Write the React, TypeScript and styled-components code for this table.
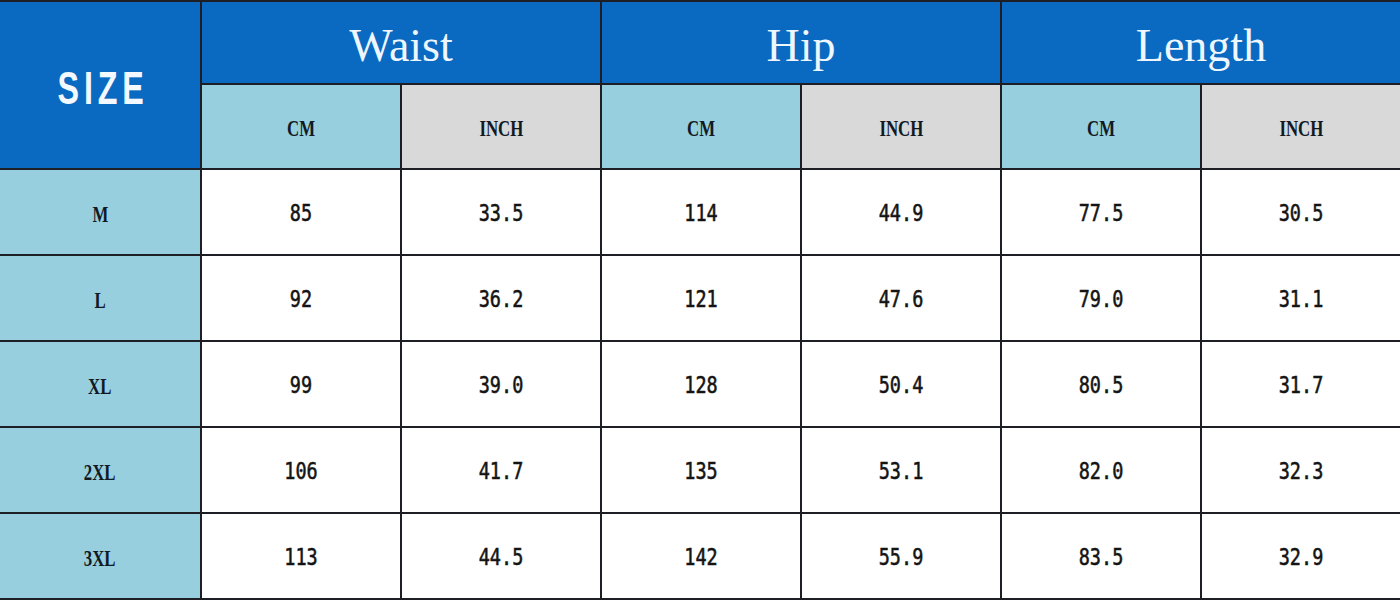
import React from "react";
import styled, { createGlobalStyle } from "styled-components";

const GlobalStyle = createGlobalStyle`
  html, body {
    margin: 0;
    padding: 0;
    background: #ffffff;
  }
`;

const Table = styled.div`
  width: 1400px;
  height: 600px;
  box-sizing: border-box;

  display: grid;
  grid-template-columns: 200px repeat(6, 198px);
  grid-template-rows: 81px 83px repeat(5, 84px);
  column-gap: 2px;
  row-gap: 2px;

  padding: 2px 0 2px 0;
  background-color: #1d1f24;
`;

type Tone = "blue" | "sky" | "grey" | "white";

const tones: Record<Tone, string> = {
  blue: "#0a69c0",
  sky: "#97cfdf",
  grey: "#d9d9d9",
  white: "#ffffff",
};

const Cell = styled.div<{ $tone: Tone; $rowSpan?: number; $colSpan?: number }>`
  background-color: ${(p) => tones[p.$tone]};
  grid-row: span ${(p) => p.$rowSpan || 1};
  grid-column: span ${(p) => p.$colSpan || 1};

  display: flex;
  justify-content: center;
  align-items: center;
  overflow: hidden;
`;

const SizeTitle = styled.span`
  display: inline-block;
  color: #f4f9ff;
  font-family: "Liberation Sans", "DejaVu Sans", sans-serif;
  font-weight: 700;
  font-size: 46px;
  letter-spacing: 7px;
  transform: scaleX(0.7);
  margin-top: 6px;
  margin-left: 6px;
`;

const GroupTitle = styled.span`
  display: inline-block;
  color: #eef6ff;
  font-family: "Liberation Serif", "DejaVu Serif", serif;
  font-size: 46px;
  margin-top: 6px;
`;

const Label = styled.span`
  display: inline-block;
  color: #111a24;
  font-family: "Liberation Serif", "DejaVu Serif", serif;
  font-weight: 700;
  font-size: 24px;
  transform: scaleX(0.7);
  margin-top: 4px;
`;

const Num = styled.span`
  display: inline-block;
  color: #141414;
  font-family: "DejaVu Sans Mono", "Liberation Mono", monospace;
  font-size: 18.5px;
  -webkit-text-stroke: 0.45px #141414;
  transform: scaleY(1.2);
  margin-top: 2px;
`;

const groups = ["Waist", "Hip", "Length"];

const rows = [
  { size: "M", values: ["85", "33.5", "114", "44.9", "77.5", "30.5"] },
  { size: "L", values: ["92", "36.2", "121", "47.6", "79.0", "31.1"] },
  { size: "XL", values: ["99", "39.0", "128", "50.4", "80.5", "31.7"] },
  { size: "2XL", values: ["106", "41.7", "135", "53.1", "82.0", "32.3"] },
  { size: "3XL", values: ["113", "44.5", "142", "55.9", "83.5", "32.9"] },
];

export default function App() {
  return (
    <>
      <GlobalStyle />
      <Table>
        <Cell $tone="blue" $rowSpan={2}>
          <SizeTitle>SIZE</SizeTitle>
        </Cell>
        {groups.map((g) => (
          <Cell key={g} $tone="blue" $colSpan={2}>
            <GroupTitle>{g}</GroupTitle>
          </Cell>
        ))}
        {groups.map((g) => (
          <React.Fragment key={g + "-units"}>
            <Cell $tone="sky">
              <Label>CM</Label>
            </Cell>
            <Cell $tone="grey">
              <Label>INCH</Label>
            </Cell>
          </React.Fragment>
        ))}
        {rows.map((r) => (
          <React.Fragment key={r.size}>
            <Cell $tone="sky">
              <Label>{r.size}</Label>
            </Cell>
            {r.values.map((v, i) => (
              <Cell key={i} $tone="white">
                <Num>{v}</Num>
              </Cell>
            ))}
          </React.Fragment>
        ))}
      </Table>
    </>
  );
}
